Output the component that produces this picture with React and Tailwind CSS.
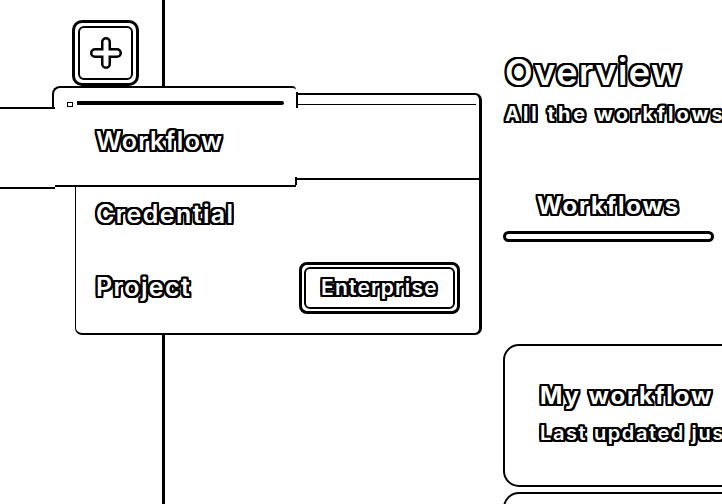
import React from 'react'

// white glyphs with a 2px black rim, like the reference
const rim =
  "text-white [text-shadow:2px_0_0_#000,-2px_0_0_#000,0_2px_0_#000,0_-2px_0_#000,2px_2px_0_#000,-2px_-2px_0_#000,2px_-2px_0_#000,-2px_2px_0_#000,1px_2px_0_#000,2px_1px_0_#000,-1px_2px_0_#000,-2px_1px_0_#000,1px_-2px_0_#000,2px_-1px_0_#000,-1px_-2px_0_#000,-2px_-1px_0_#000]"

const PlusIcon = () => (
  <svg width="34" height="34" viewBox="0 0 34 34" fill="none">
    <g strokeLinecap="round">
      <path d="M17 6v22M6 17h22" stroke="#000" strokeWidth="10" />
      <path d="M17 6v22M6 17h22" stroke="#fff" strokeWidth="5" />
    </g>
  </svg>
)

const AddMenu = () => {
  const items = ['Workflow', 'Credential', 'Project']

  return (
    <div className="absolute left-[75px] top-[93px] w-[407px] h-[242px] bg-white border-l border-t-2 border-r-[3px] border-b-2 border-black rounded-[7px]">
      {/* edge of the hovered row inside the panel */}
      <div className="absolute left-[221px] right-[3px] top-[9px] h-px bg-black" />
      <div className="absolute left-[220px] right-0 top-[83px] h-[2px] bg-black" />

      {/* hovered row highlight */}
      <div className="absolute left-[-24px] top-[-9px] w-[244px] h-[101px] bg-white border-t-2 border-l-2 border-b-2 border-black rounded-tl-[8px] rounded-tr-[4px]">
        <div className="absolute left-[13px] top-[14px] w-[6px] h-[5px] border border-black" />
        <div className="absolute left-[23px] top-[13px] w-[207px] h-[4px] bg-black rounded-r-[2px]" />
        <div className="absolute right-[-2px] top-[4px] w-[2px] h-[16px] bg-black" />
        <div className="absolute right-[-1px] bottom-0 w-[2px] h-[8px] bg-black" />
      </div>
      <div className="absolute left-[-77px] top-[12px] w-[56px] h-[82px] bg-white border-t-2 border-b-2 border-black" />

      <div className="relative flex flex-col pt-[10px] pl-[20px] pr-[19px]">
        {items.map(label => (
          <div key={label} className="h-[73px] flex items-center justify-between">
            <span className={`text-[25px] font-semibold leading-none tracking-[1.4px] ${rim}`}>{label}</span>
            {label === 'Project' && (
              <span className="w-[161px] h-[52px] rounded-[8px] border-[3px] border-black p-[2px]">
                <span className="w-full h-full rounded-[6px] border-2 border-black flex items-center justify-center">
                  <span className={`text-[21px] font-semibold leading-none tracking-[1.2px] ${rim}`}>Enterprise</span>
                </span>
              </span>
            )}
          </div>
        ))}
      </div>
    </div>
  )
}

export default function App() {
  return (
    <div className="relative flex w-[722px] h-[504px] overflow-hidden bg-white font-['Inter',sans-serif]">
      <aside className="relative w-[165px] shrink-0 border-r-[3px] border-black pt-[20px] pl-[72px]">
        <button className="w-[67px] h-[66px] rounded-[10px] border-[3px] border-black p-[3px]">
          <div className="w-full h-full rounded-[6px] border-2 border-black flex items-center justify-center">
            <PlusIcon />
          </div>
        </button>
        <AddMenu />
      </aside>

      <main className="flex-1 pl-[340px] pt-[54px]">
        <div className="w-[420px] flex flex-col">
          <h1 className={`text-[36px] font-semibold leading-none tracking-[1.5px] whitespace-nowrap ${rim}`}>Overview</h1>
          <p className={`mt-[14px] text-[20px] font-bold leading-none tracking-[3px] whitespace-nowrap ${rim}`}>
            All the workflows, credentials and executions you have access to
          </p>

          <div className="mt-[70px] ml-[-2px] w-[211px] flex flex-col items-center gap-[13px]">
            <span className={`text-[24px] font-bold leading-none tracking-[1.8px] ${rim}`}>Workflows</span>
            <div className="w-full h-[11px] rounded-full border-[3px] border-black" />
          </div>

          <div className="mt-[102px] ml-[-2px] flex flex-col gap-[5px]">
            <div className="h-[143px] rounded-[16px] border-2 border-black pt-[38px] pl-[35px] flex flex-col gap-[15px]">
              <div className={`text-[24px] font-bold leading-none tracking-[1.9px] whitespace-nowrap ${rim}`}>My workflow</div>
              <div className={`text-[20px] font-semibold leading-none tracking-[1.6px] whitespace-nowrap ${rim}`}>
                Last updated just now | Created 1 January
              </div>
            </div>
            <div className="h-[143px] rounded-[16px] border-2 border-black" />
          </div>
        </div>
      </main>
    </div>
  )
}
